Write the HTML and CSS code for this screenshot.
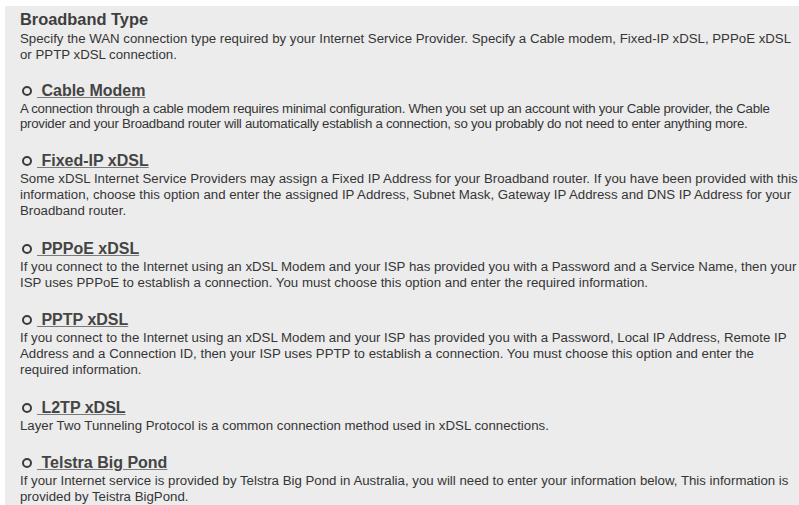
FILE: index.html
```html
<!DOCTYPE html>
<html>
<head>
<meta charset="utf-8">
<title>Broadband Type</title>
<link rel="stylesheet" href="styles.css">
</head>
<body>
<div class="panel">
  <h1 class="title">Broadband Type</h1>
  <p class="desc">Specify the WAN connection type required by your Internet Service Provider. Specify a Cable modem, Fixed-IP xDSL, PPPoE xDSL<br>or PPTP xDSL connection.</p>

  <div class="option first">
    <h2 class="opt-head"><span class="radio"></span><a href="#" class="opt-link">&nbsp;Cable Modem</a></h2>
    <p class="desc desc-tight">A connection through a cable modem requires minimal configuration. When you set up an account with your Cable provider, the Cable<br>provider and your Broadband router will automatically establish a connection, so you probably do not need to enter anything more.</p>
  </div>

  <div class="option">
    <h2 class="opt-head"><span class="radio"></span><a href="#" class="opt-link">&nbsp;Fixed-IP xDSL</a></h2>
    <p class="desc">Some xDSL Internet Service Providers may assign a Fixed IP Address for your Broadband router. If you have been provided with this<br>information, choose this option and enter the assigned IP Address, Subnet Mask, Gateway IP Address and DNS IP Address for your<br>Broadband router.</p>
  </div>

  <div class="option">
    <h2 class="opt-head"><span class="radio"></span><a href="#" class="opt-link">&nbsp;PPPoE xDSL</a></h2>
    <p class="desc">If you connect to the Internet using an xDSL Modem and your ISP has provided you with a Password and a Service Name, then your<br>ISP uses PPPoE to establish a connection. You must choose this option and enter the required information.</p>
  </div>

  <div class="option">
    <h2 class="opt-head"><span class="radio"></span><a href="#" class="opt-link">&nbsp;PPTP xDSL</a></h2>
    <p class="desc">If you connect to the Internet using an xDSL Modem and your ISP has provided you with a Password, Local IP Address, Remote IP<br>Address and a Connection ID, then your ISP uses PPTP to establish a connection. You must choose this option and enter the<br>required information.</p>
  </div>

  <div class="option">
    <h2 class="opt-head"><span class="radio"></span><a href="#" class="opt-link">&nbsp;L2TP xDSL</a></h2>
    <p class="desc">Layer Two Tunneling Protocol is a common connection method used in xDSL connections.</p>
  </div>

  <div class="option">
    <h2 class="opt-head"><span class="radio"></span><a href="#" class="opt-link">&nbsp;Telstra Big Pond</a></h2>
    <p class="desc">If your Internet service is provided by Telstra Big Pond in Australia, you will need to enter your information below, This information is<br>provided by Teistra BigPond.</p>
  </div>
</div>
</body>
</html>
```

FILE: styles.css
```css
html, body {
  margin: 0;
  padding: 0;
  background: #ffffff;
  overflow: hidden;
}

body {
  padding: 6px 0 0 5px;
  font-family: "Liberation Sans", Arial, sans-serif;
  color: #353535;
}

.panel {
  background: #ececec;
  width: 830px;
  height: 520px;
  padding: 3px 0 0 15px;
  box-sizing: border-box;
  white-space: nowrap;
}

.title {
  margin: 0 0 2px;
  font-size: 16.4px;
  line-height: 20px;
  font-weight: bold;
  color: #3e3e3e;
}

.desc {
  margin: 0;
  font-size: 13.25px;
  line-height: 16px;
  color: #353535;
}

/* this paragraph sits a touch narrower so its long lines stay in view */
.desc-tight {
  letter-spacing: -0.27px;
  line-height: 15.5px;
}

.option {
  margin-top: 19.5px;
}

.option.first {
  margin-top: 17.5px;
}

.opt-head {
  margin: 0;
  display: flex;
  align-items: center;
  font-size: 16px;
  line-height: 20px;
  font-weight: bold;
  padding-left: 2px;
}

.radio {
  width: 6px;
  height: 6px;
  border: 2px solid #3c3c3c;
  border-radius: 50%;
  margin-right: 5px;
}

.opt-link {
  color: #444444;
  text-decoration: underline;
  text-decoration-color: #7a7a7a;
}
```
